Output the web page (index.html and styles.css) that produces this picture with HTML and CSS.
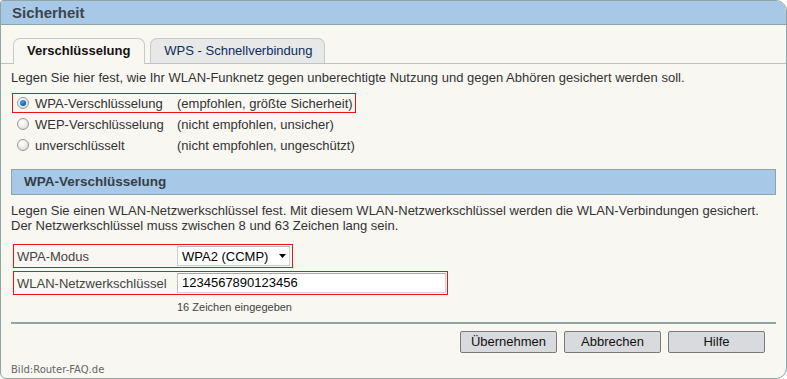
FILE: index.html
```html
<!DOCTYPE html>
<html lang="de">
<head>
<meta charset="utf-8">
<title>Sicherheit</title>
<link rel="stylesheet" href="styles.css">
</head>
<body>
<div class="frame">
  <div class="titlebar">Sicherheit</div>
  <div class="tabbar">
    <div class="tab active">Verschlüsselung</div>
    <div class="tab">WPS - Schnellverbindung</div>
  </div>
  <div class="content">
    <p class="intro">Legen Sie hier fest, wie Ihr WLAN-Funknetz gegen unberechtigte Nutzung und gegen Abhören gesichert werden soll.</p>
    <div class="radios">
      <div class="radio-row boxed">
        <span class="radio on"></span>
        <span class="rlabel">WPA-Verschlüsselung</span>
        <span class="rnote">(empfohlen, größte Sicherheit)</span>
      </div>
      <div class="radio-row">
        <span class="radio"></span>
        <span class="rlabel">WEP-Verschlüsselung</span>
        <span class="rnote">(nicht empfohlen, unsicher)</span>
      </div>
      <div class="radio-row">
        <span class="radio"></span>
        <span class="rlabel">unverschlüsselt</span>
        <span class="rnote">(nicht empfohlen, ungeschützt)</span>
      </div>
    </div>
    <div class="section">WPA-Verschlüsselung</div>
    <p class="desc">Legen Sie einen WLAN-Netzwerkschlüssel fest. Mit diesem WLAN-Netzwerkschlüssel werden die WLAN-Verbindungen gesichert.<br>Der Netzwerkschlüssel muss zwischen 8 und 63 Zeichen lang sein.</p>
    <div class="form">
      <div class="frow boxed mode">
        <span class="flabel">WPA-Modus</span>
        <div class="select">
          <span>WPA2 (CCMP)</span>
          <svg class="caret" width="7" height="4" viewBox="0 0 7 4"><path d="M0 0H7L3.5 4Z" fill="#000"/></svg>
        </div>
      </div>
      <div class="frow boxed key">
        <span class="flabel">WLAN-Netzwerkschlüssel</span>
        <div class="input">1234567890123456</div>
      </div>
    </div>
    <div class="hint">16 Zeichen eingegeben</div>
    <div class="sep"></div>
    <div class="buttons">
      <div class="btnwrap boxed"><div class="btn">Übernehmen</div></div>
      <div class="btnwrap"><div class="btn">Abbrechen</div></div>
      <div class="btnwrap"><div class="btn">Hilfe</div></div>
    </div>
  </div>
  <div class="credit">Bild:Router-FAQ.de</div>
</div>
</body>
</html>
```
FILE: styles.css
```css
html, body {
  margin: 0;
  padding: 0;
  background: #ffffff;
}
body {
  font-family: "Liberation Sans", Arial, sans-serif;
  font-size: 13px;
  color: #333333;
}
.frame {
  box-sizing: border-box;
  width: 787px;
  height: 379px;
  border: 1px solid #8fa5a5;
  border-radius: 3px 11px 11px 6px;
  background: #f8f7f2;
  overflow: hidden;
  display: flex;
  flex-direction: column;
}
.titlebar {
  height: 23px;
  border-bottom: 1px solid #8fa5a5;
  background: #a7c8e6;
  padding-left: 11px;
  font-size: 15px;
  font-weight: bold;
  line-height: 24px;
  color: #3b4650;
}
.tabbar {
  margin-top: 13px;
  height: 25px;
  border-bottom: 1px solid #bac5c5;
  padding-left: 12px;
  display: flex;
  align-items: flex-end;
  gap: 5px;
}
.tab {
  box-sizing: border-box;
  height: 25px;
  padding: 0 12px 0 13px;
  border: 1px solid #c3cbcb;
  border-bottom: none;
  border-radius: 7px 7px 0 0;
  background: #e8e8e8;
  color: #0c2c5c;
  line-height: 24px;
}
.tab.active {
  height: 26px;
  margin-bottom: -1px;
  padding: 0 14px 0 13px;
  background: #f8f7f2;
  color: #111111;
  font-weight: bold;
}
.content {
  padding: 0 10px 0 10px;
  flex: 1;
}
.intro {
  margin: 6px 0 0 0;
  line-height: 15px;
}
.radios {
  margin-top: 8px;
  display: flex;
  flex-direction: column;
  gap: 1px;
}
.radio-row {
  box-sizing: border-box;
  height: 20px;
  width: 344px;
  margin-left: 1px;
  border: 1px solid transparent;
  display: flex;
  align-items: center;
  padding-left: 4px;
}
.boxed {
  border: 1px solid #e8141c;
}
.radio {
  box-sizing: border-box;
  width: 12px;
  height: 12px;
  border-radius: 50%;
  border: 1px solid #9a9a9a;
  background: radial-gradient(circle at 40% 35%, #ffffff 0%, #f0f0f0 40%, #cfcfcf 100%);
  display: flex;
  align-items: center;
  justify-content: center;
  flex: none;
}
.radio.on::after {
  content: "";
  width: 6px;
  height: 6px;
  border-radius: 50%;
  background: radial-gradient(circle at 40% 35%, #4aa6ec 0%, #1565b0 60%, #0a3f78 100%);
}
.rlabel {
  margin-left: 6px;
  width: 142px;
}
.section {
  box-sizing: border-box;
  margin-top: 14px;
  height: 26px;
  border: 1px solid #8fa5a5;
  background: #a7c8e6;
  padding-left: 12px;
  font-weight: bold;
  font-size: 13.5px;
  line-height: 24px;
  color: #333f48;
}
.desc {
  margin: 8px 0 0 0;
  line-height: 15px;
}
.form {
  margin-top: 11px;
  display: flex;
  flex-direction: column;
  gap: 3px;
}
.frow {
  box-sizing: border-box;
  height: 24px;
  margin-left: 2px;
  display: flex;
  align-items: center;
  padding-left: 3px;
}
.frow.mode { width: 280px; }
.frow.key { width: 435px; }
.flabel {
  width: 160px;
  color: #444444;
}
.select {
  box-sizing: border-box;
  width: 113px;
  height: 20px;
  background: #ffffff;
  border: 1px solid #d0d0d0;
  border-top-color: #b8b8b8;
  display: flex;
  align-items: center;
  justify-content: space-between;
  padding: 0 3px 0 4px;
  color: #000000;
}
.caret { display: block; }
.input {
  box-sizing: border-box;
  width: 269px;
  height: 20px;
  background: #ffffff;
  border: 1px solid #d4d4d4;
  border-top-color: #a8a8a8;
  border-left-color: #c0c0c0;
  padding-left: 4px;
  line-height: 18px;
  color: #000000;
}
.hint {
  margin: 5px 0 0 166px;
  font-size: 11px;
  line-height: 14px;
  color: #444444;
}
.sep {
  margin-top: 8px;
  height: 2px;
  background: #8fa5a5;
}
.buttons {
  margin-top: 4px;
  display: flex;
  justify-content: flex-end;
  gap: 1px;
  padding-right: 8px;
}
.btnwrap {
  box-sizing: border-box;
  padding: 2px;
  border: 1px solid transparent;
}
.btn {
  box-sizing: border-box;
  width: 97px;
  height: 22px;
  border: 1px solid #7a7a7a;
  border-radius: 2px;
  background: #d8dadd;
  color: #111111;
  text-align: center;
  line-height: 20px;
}
.credit {
  padding: 0 0 1px 10px;
  font-family: "DejaVu Sans", sans-serif;
  font-size: 10px;
  line-height: 14px;
  color: #666666;
}
```
